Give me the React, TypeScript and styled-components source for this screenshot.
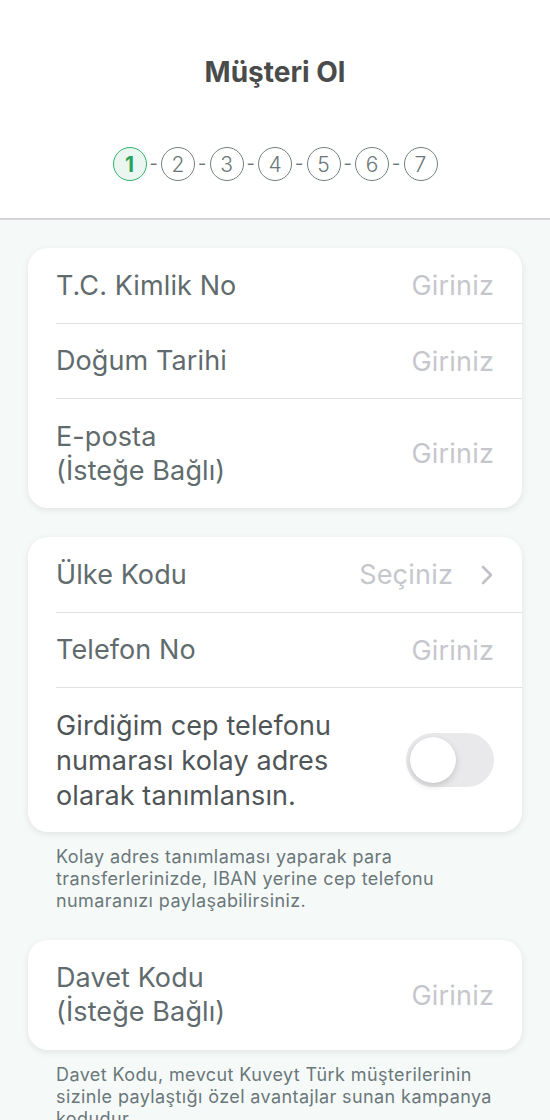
import React from "react";
import styled, { createGlobalStyle } from "styled-components";

const Global = createGlobalStyle`
  html, body { margin: 0; padding: 0; }
  body {
    background: #f5faf9;
    font-family: Inter, "Noto Sans", "Liberation Sans", sans-serif;
    -webkit-font-smoothing: antialiased;
  }
`;

const Page = styled.div`
  width: 550px;
  min-height: 1120px;
  background: #f5faf9;
`;

const Header = styled.header`
  background: #ffffff;
  height: 220px;
  border-bottom: 2px solid #d4d4d9;
  display: flex;
  flex-direction: column;
  align-items: center;
  padding-top: 56px;
  box-sizing: border-box;
`;

const Title = styled.h1`
  margin: 0;
  font-size: 28px;
  line-height: 32px;
  font-weight: 700;
  color: #4a4b4b;
  letter-spacing: 0;
`;

const Steps = styled.div`
  margin-top: 59px;
  display: flex;
  align-items: center;
`;

const Step = styled.div<{ $active?: boolean }>`
  width: 34px;
  height: 34px;
  box-sizing: border-box;
  border-radius: 50%;
  border: 1.6px solid ${(p) => (p.$active ? "#2fb46b" : "#737e80")};
  background: ${(p) => (p.$active ? "#eaf6ef" : "#ffffff")};
  color: ${(p) => (p.$active ? "#27a35c" : "#6b7779")};
  font-weight: ${(p) => (p.$active ? 700 : 300)};
  font-size: 21px;
  display: flex;
  align-items: center;
  justify-content: center;
`;

const Dash = styled.span`
  width: 14.5px;
  text-align: center;
  font-size: 18px;
  color: #6b7779;
  line-height: 1;
`;

const Content = styled.main`
  padding: 28px 28px 0;
  display: flex;
  flex-direction: column;
`;

const Card = styled.section<{ $gap?: number }>`
  background: #ffffff;
  border-radius: 20px;
  box-shadow: 0 2px 7px rgba(0, 0, 0, 0.09);
  margin-bottom: ${(p) => p.$gap ?? 29}px;
  overflow: hidden;
`;

const Row = styled.div<{ $min?: number }>`
  display: flex;
  align-items: center;
  justify-content: space-between;
  margin-left: 28px;
  padding-right: 28px;
  min-height: ${(p) => p.$min ?? 75}px;
  box-sizing: border-box;
  & + & {
    border-top: 1.5px solid #dfe0e3;
  }
`;

const Label = styled.div`
  font-size: 27px;
  line-height: 34px;
  color: #5f6b6d;
  letter-spacing: 0.1px;
`;

const ToggleLabel = styled(Label)`
  color: #4f5557;
  line-height: 35px;
  max-width: 320px;
`;

const Placeholder = styled.div`
  font-size: 27px;
  color: #c6c7cc;
  letter-spacing: 0.2px;
  display: flex;
  align-items: center;
  gap: 27px;
`;

const Track = styled.div`
  width: 88px;
  height: 54px;
  border-radius: 27px;
  background: #e9e9eb;
  padding: 4px;
  box-sizing: border-box;
  flex-shrink: 0;
`;

const Knob = styled.div`
  width: 46px;
  height: 46px;
  border-radius: 50%;
  background: #ffffff;
  box-shadow: 0 3px 7px rgba(0, 0, 0, 0.15), 0 0 1px rgba(0, 0, 0, 0.12);
`;

const Note = styled.p<{ $gap?: number }>`
  margin: -15px 0 ${(p) => p.$gap ?? 28}px;
  padding: 0 28px;
  font-size: 18px;
  line-height: 22px;
  color: #6b7779;
  letter-spacing: 0.4px;
`;

const Chevron = () => (
  <svg width="14" height="24" viewBox="0 0 14 24" fill="none">
    <path d="M3 4l8 8-8 8" stroke="#c0c2c7" strokeWidth="2.6" strokeLinecap="round" strokeLinejoin="round" />
  </svg>
);

export default function App() {
  const steps = [1, 2, 3, 4, 5, 6, 7];
  return (
    <Page>
      <Global />
      <Header>
        <Title>Müşteri Ol</Title>
        <Steps>
          {steps.map((n, i) => (
            <React.Fragment key={n}>
              {i > 0 && <Dash>-</Dash>}
              <Step $active={n === 1}>{n}</Step>
            </React.Fragment>
          ))}
        </Steps>
      </Header>
      <Content>
        <Card>
          <Row>
            <Label>T.C. Kimlik No</Label>
            <Placeholder>Giriniz</Placeholder>
          </Row>
          <Row>
            <Label>Doğum Tarihi</Label>
            <Placeholder>Giriniz</Placeholder>
          </Row>
          <Row $min={110}>
            <Label>
              E-posta
              <br />
              (İsteğe Bağlı)
            </Label>
            <Placeholder>Giriniz</Placeholder>
          </Row>
        </Card>
        <Card>
          <Row>
            <Label>Ülke Kodu</Label>
            <Placeholder>
              Seçiniz
              <Chevron />
            </Placeholder>
          </Row>
          <Row>
            <Label>Telefon No</Label>
            <Placeholder>Giriniz</Placeholder>
          </Row>
          <Row $min={145}>
            <ToggleLabel>Girdiğim cep telefonu numarası kolay adres olarak tanımlansın.</ToggleLabel>
            <Track>
              <Knob />
            </Track>
          </Row>
        </Card>
        <Note>
          Kolay adres tanımlaması yaparak para transferlerinizde, IBAN yerine cep telefonu numaranızı
          paylaşabilirsiniz.
        </Note>
        <Card>
          <Row $min={110}>
            <Label>
              Davet Kodu
              <br />
              (İsteğe Bağlı)
            </Label>
            <Placeholder>Giriniz</Placeholder>
          </Row>
        </Card>
        <Note>
          Davet Kodu, mevcut Kuveyt Türk müşterilerinin sizinle paylaştığı özel avantajlar sunan kampanya
          kodudur.
        </Note>
      </Content>
    </Page>
  );
}
